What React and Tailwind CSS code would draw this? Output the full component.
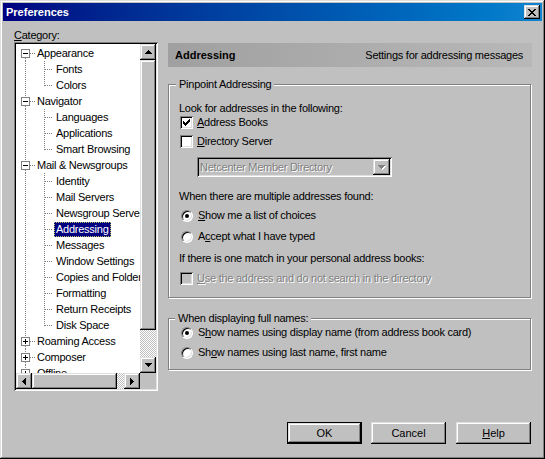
import React from "react";

const raised =
  "shadow-[inset_-1px_-1px_#000,inset_1px_1px_#dfdfdf,inset_-2px_-2px_#808080,inset_2px_2px_#fff]";
const sunken =
  "shadow-[inset_1px_1px_#808080,inset_-1px_-1px_#fff,inset_2px_2px_#000,inset_-2px_-2px_#dfdfdf]";
const checker =
  "bg-[repeating-conic-gradient(#fff_0_25%,#c0c0c0_0_50%)] bg-[length:2px_2px]";

function Pixels({ rows, color = "#000", className = "" }) {
  const h = rows.length;
  const w = rows[0].length;
  const rects = [];
  rows.forEach((r, y) => {
    for (let x = 0; x < r.length; x++) {
      if (r[x] === "X") rects.push(<rect key={x + "-" + y} x={x} y={y} width="1" height="1" />);
    }
  });
  return (
    <svg width={w} height={h} viewBox={`0 0 ${w} ${h}`} fill={color} shapeRendering="crispEdges" className={className}>
      {rects}
    </svg>
  );
}

const UP = ["...X...", "..XXX..", ".XXXXX.", "XXXXXXX"];
const DOWN = ["XXXXXXX", ".XXXXX.", "..XXX..", "...X..."];
const LEFT = ["...X", "..XX", ".XXX", "XXXX", ".XXX", "..XX", "...X"];
const RIGHT = ["X...", "XX..", "XXX.", "XXXX", "XXX.", "XX..", "X..."];
const CLOSE = ["XX....XX", ".XX..XX.", "..XXXX..", "...XX...", "..XXXX..", ".XX..XX.", "XX....XX"];
const CHECK = ["......X", ".....XX", "X...XXX", "XX.XXX.", "XXXXX..", ".XXX...", "..X...."];

function ScrollBtn({ glyph, className = "" }) {
  return (
    <div className={`w-[16px] h-[16px] shrink-0 bg-[#c0c0c0] flex items-center justify-center ${raised} ${className}`}>
      <Pixels rows={glyph} />
    </div>
  );
}

const tree = [
  { l: 0, t: "Appearance", e: "-", first: true },
  { l: 1, t: "Fonts" },
  { l: 1, t: "Colors", last: true },
  { l: 0, t: "Navigator", e: "-" },
  { l: 1, t: "Languages" },
  { l: 1, t: "Applications" },
  { l: 1, t: "Smart Browsing", last: true },
  { l: 0, t: "Mail & Newsgroups", e: "-" },
  { l: 1, t: "Identity" },
  { l: 1, t: "Mail Servers" },
  { l: 1, t: "Newsgroup Servers" },
  { l: 1, t: "Addressing", sel: true },
  { l: 1, t: "Messages" },
  { l: 1, t: "Window Settings" },
  { l: 1, t: "Copies and Folders" },
  { l: 1, t: "Formatting" },
  { l: 1, t: "Return Receipts" },
  { l: 1, t: "Disk Space", last: true },
  { l: 0, t: "Roaming Access", e: "+" },
  { l: 0, t: "Composer", e: "+" },
  { l: 0, t: "Offline", e: "+" },
  { l: 0, t: "Advanced", e: "+" },
];

function TreeRow({ r }) {
  const dot = { stroke: "#808080", strokeDasharray: "1 1", strokeWidth: 1 };
  return (
    <div className="flex h-[16px] items-center whitespace-nowrap">
      {r.l === 0 ? (
        <svg width="19" height="16" className="shrink-0">
          {!r.first && <line x1="9.5" y1="0" x2="9.5" y2="4" {...dot} />}
          <line x1="9.5" y1="13" x2="9.5" y2="16" {...dot} />
          <rect x="5.5" y="4.5" width="8" height="8" fill="#fff" stroke="#808080" />
          <line x1="7" y1="8.5" x2="12" y2="8.5" stroke="#000" />
          {r.e === "+" && <line x1="9.5" y1="6" x2="9.5" y2="11" stroke="#000" />}
          <line x1="14" y1="8.5" x2="19" y2="8.5" {...dot} />
        </svg>
      ) : (
        <svg width="38" height="16" className="shrink-0">
          <line x1="9.5" y1="0" x2="9.5" y2="16" {...dot} />
          <line x1="28.5" y1="0" x2="28.5" y2={r.last ? 9 : 16} {...dot} />
          <line x1="29" y1="8.5" x2="37" y2="8.5" {...dot} />
        </svg>
      )}
      {r.sel ? (
        <span className="h-[15px] leading-[13px] px-[1px] bg-[#000080] text-white border border-dotted border-[#c0c060]">
          {r.t}
        </span>
      ) : (
        <span className="px-[2px] leading-[16px]">{r.t}</span>
      )}
    </div>
  );
}

function Checkbox({ checked, disabled }) {
  return (
    <div className={`w-[13px] h-[13px] shrink-0 flex items-center justify-center ${sunken} ${disabled ? "bg-[#c0c0c0]" : "bg-white"}`}>
      {checked && <Pixels rows={CHECK} />}
    </div>
  );
}

function Radio({ checked }) {
  return (
    <div className="w-[12px] h-[12px] shrink-0 rounded-full border border-t-[#808080] border-l-[#808080] border-b-white border-r-white bg-white shadow-[inset_1px_1px_#000,inset_-1px_-1px_#dfdfdf] flex items-center justify-center">
      {checked && <div className="w-[4px] h-[4px] rounded-full bg-black" />}
    </div>
  );
}

function Group({ label, labelMl, className = "", children }) {
  return (
    <div className={`w-[363px] border border-[#808080] shadow-[1px_1px_0_#fff,inset_1px_1px_0_#fff] flex flex-col pl-[10px] ${className}`}>
      <div className={`-mt-[7px] h-[13px] leading-[13px] px-[3px] bg-[#c0c0c0] w-fit ${labelMl}`}>{label}</div>
      {children}
    </div>
  );
}

function Button({ children, def, className = "" }) {
  return (
    <div className={`w-[75px] h-[22px] ${def ? "border border-black" : ""} ${className}`}>
      <div className={`w-full h-full bg-[#c0c0c0] flex items-center justify-center ${raised}`}>{children}</div>
    </div>
  );
}

export default function App() {
  return (
    <div className={`w-[545px] h-[459px] bg-[#c0c0c0] p-[3px] flex flex-col text-[11px] text-black font-['Liberation_Sans',Arial,sans-serif] ${raised}`}>
      {/* title bar */}
      <div className="h-[18px] shrink-0 bg-gradient-to-r from-[#000080] to-[#1084d0] flex items-center pl-[3px] pr-[2px]">
        <span className="text-white font-bold text-[11px] leading-[18px] flex-1">Preferences</span>
        <div className={`w-[16px] h-[14px] bg-[#c0c0c0] flex items-center justify-center ${raised}`}>
          <Pixels rows={CLOSE} />
        </div>
      </div>

      {/* body */}
      <div className="flex pl-[11px] gap-[10px] tracking-[-0.25px]">
        {/* left */}
        <div className="w-[144px] flex flex-col">
          <div className="mt-[8px] h-[13px] leading-[13px]">
            <u>C</u>ategory:
          </div>
          <div className={`h-[349px] bg-white p-[2px] grid grid-cols-[1fr_16px] grid-rows-[1fr_16px] ${sunken}`}>
            <div className="overflow-hidden pt-[1px]">
              {tree.map((r) => (
                <TreeRow key={r.t} r={r} />
              ))}
            </div>
            <div className="flex flex-col bg-[#c0c0c0]">
              <ScrollBtn glyph={UP} />
              <div className={`h-[270px] shrink-0 bg-[#c0c0c0] ${raised}`} />
              <div className={`flex-1 ${checker}`} />
              <ScrollBtn glyph={DOWN} />
            </div>
            <div className="flex bg-[#c0c0c0]">
              <ScrollBtn glyph={LEFT} />
              <div className={`w-[85px] shrink-0 bg-[#c0c0c0] ${raised}`} />
              <div className={`flex-1 ${checker}`} />
              <ScrollBtn glyph={RIGHT} />
            </div>
            <div className="bg-[#c0c0c0]" />
          </div>
        </div>

        {/* right */}
        <div className="w-[364px] mt-[22px] flex flex-col">
          <div className="h-[24px] bg-gradient-to-r from-[#a0a0a0] to-[#b8b8b8] flex items-center justify-between pl-[7px] pr-[9px]">
            <span className="font-bold tracking-normal">Addressing</span>
            <span>Settings for addressing messages</span>
          </div>

          <Group label="Pinpoint Addressing" labelMl="-ml-[3px]" className="mt-[17px] h-[214px]">
            <div className="mt-[11px] h-[13px] leading-[13px]">Look for addresses in the following:</div>
            <div className="mt-[1px] h-[13px] flex items-center ml-[1px] gap-[4px]">
              <Checkbox checked />
              <span className="leading-[13px]">
                <u>A</u>ddress Books
              </span>
            </div>
            <div className="mt-[6px] h-[13px] flex items-center ml-[1px] gap-[4px]">
              <Checkbox />
              <span className="leading-[13px]">
                <u>D</u>irectory Server
              </span>
            </div>
            <div className={`mt-[9px] ml-[18px] w-[195px] h-[20px] bg-[#c0c0c0] p-[2px] flex ${sunken}`}>
              <div className="flex-1 pl-[1px] leading-[16px] text-[#808080] [text-shadow:1px_1px_0_#fff]">
                Netcenter Member Directory
              </div>
              <div className={`w-[17px] h-[16px] bg-[#c0c0c0] flex items-center justify-center ${raised}`}>
                <div className="relative">
                  <Pixels rows={DOWN} color="#fff" className="absolute left-[1px] top-[1px]" />
                  <Pixels rows={DOWN} color="#808080" className="relative" />
                </div>
              </div>
            </div>
            <div className="mt-[13px] h-[13px] leading-[13px]">When there are multiple addresses found:</div>
            <div className="mt-[6px] h-[13px] flex items-center ml-[2px] gap-[5px]">
              <Radio checked />
              <span className="leading-[13px]">
                <u>S</u>how me a list of choices
              </span>
            </div>
            <div className="mt-[8px] h-[13px] flex items-center ml-[2px] gap-[5px]">
              <Radio />
              <span className="leading-[13px]">
                A<u>c</u>cept what I have typed
              </span>
            </div>
            <div className="mt-[9px] h-[13px] leading-[13px]">If there is one match in your personal address books:</div>
            <div className="mt-[7px] h-[13px] flex items-center ml-[1px] gap-[4px]">
              <Checkbox disabled />
              <span className="leading-[13px] text-[#808080] [text-shadow:1px_1px_0_#fff]">
                <u>U</u>se the address and do not search in the directory
              </span>
            </div>
          </Group>

          <Group label="When displaying full names:" labelMl="-ml-[4px]" className="mt-[20px] h-[52px]">
            <div className="mt-[1px] h-[13px] flex items-center ml-[2px] gap-[5px]">
              <Radio checked />
              <span className="leading-[13px]">
                S<u>h</u>ow names using display name (from address book card)
              </span>
            </div>
            <div className="mt-[7px] h-[13px] flex items-center ml-[2px] gap-[5px]">
              <Radio />
              <span className="leading-[13px]">
                Sh<u>o</u>w names using last name, first name
              </span>
            </div>
          </Group>
        </div>
      </div>

      {/* buttons */}
      <div className="mt-[31px] flex justify-end pr-[11px]">
        <Button def>OK</Button>
        <Button className="ml-[9px]">Cancel</Button>
        <Button className="ml-[10px]">
          <span>
            <u>H</u>elp
          </span>
        </Button>
      </div>
    </div>
  );
}
